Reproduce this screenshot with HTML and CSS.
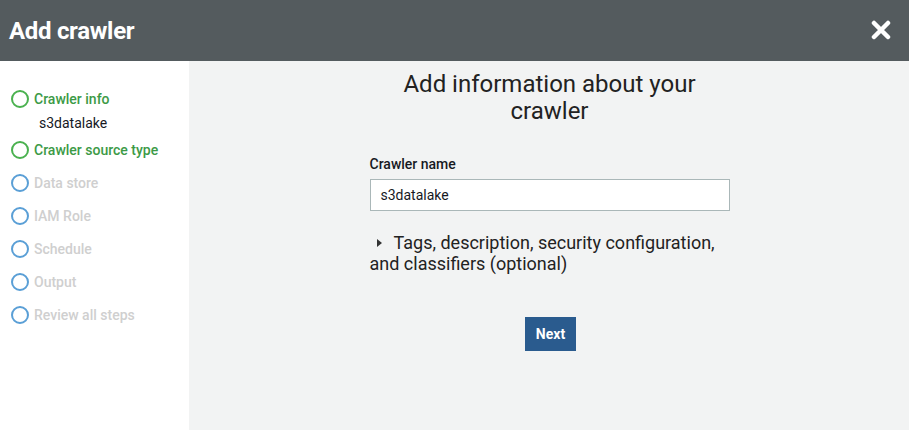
FILE: index.html
```html
<!DOCTYPE html>
<html>
<head>
<meta charset="utf-8">
<link rel="stylesheet" href="styles.css">
</head>
<body>
<div class="app">
  <header class="topbar">
    <h1 class="title">Add crawler</h1>
    <svg class="close" viewBox="0 0 20 20" width="20" height="20"><path d="M3 3 L17 17 M17 3 L3 17" stroke="#fff" stroke-width="4.5" stroke-linecap="round"/></svg>
  </header>
  <div class="body">
    <nav class="steps">
      <div class="step done"><span class="dot"></span><span class="label">Crawler info</span></div>
      <div class="sub">s3datalake</div>
      <div class="step done"><span class="dot"></span><span class="label">Crawler source type</span></div>
      <div class="step"><span class="dot"></span><span class="label">Data store</span></div>
      <div class="step"><span class="dot"></span><span class="label">IAM Role</span></div>
      <div class="step"><span class="dot"></span><span class="label">Schedule</span></div>
      <div class="step"><span class="dot"></span><span class="label">Output</span></div>
      <div class="step"><span class="dot"></span><span class="label">Review all steps</span></div>
    </nav>
    <main class="main">
      <div class="form">
        <h2 class="heading">Add information about your<br>crawler</h2>
        <label class="field-label">Crawler name</label>
        <div class="input">s3datalake</div>
        <div class="expander"><span class="caret"></span>Tags, description, security configuration, and classifiers (optional)</div>
        <div class="actions"><button class="btn">Next</button></div>
      </div>
    </main>
  </div>
</div>
</body>
</html>
```
FILE: styles.css
```css
* { box-sizing: border-box; }
html, body { margin: 0; padding: 0; }
body { font-family: Roboto, "Liberation Sans", sans-serif; color: #16191f; }
.app { width: 909px; height: 430px; display: flex; flex-direction: column; background: #f2f3f3; overflow: hidden; }
.topbar { height: 61px; background: #545b5e; display: flex; align-items: center; justify-content: space-between; padding: 0 18px 0 9px; flex: none; }
.title { margin: 0; color: #fff; font-size: 24px; font-weight: 700; letter-spacing: -0.3px; }
.close { display: block; margin-top: -2px; }
.body { flex: 1; display: flex; }
.steps { width: 189px; background: #fff; padding-top: 30px; flex: none; }
.step { display: flex; align-items: center; height: 33px; padding-left: 11px; margin-top: -9px; margin-bottom: 9px; }
.step .dot { width: 18px; height: 18px; border: 2px solid #5a9fd6; border-radius: 50%; flex: none; }
.step .label { margin-left: 5px; font-size: 14px; font-weight: 500; color: #cfcfcf; }
.step.done .dot { border-color: #4ab14f; }
.step.done .label { color: #3c9a46; }
.sub { font-size: 14px; color: #16191f; padding-left: 39px; margin-top: -9px; margin-bottom: 10px; height: 17px; }
.main { flex: 1; display: flex; justify-content: center; }
.form { width: 360px; margin-left: 1px; display: flex; flex-direction: column; }
.heading { margin: 10px 0 0; font-size: 24px; font-weight: 400; text-align: center; line-height: 27px; color: #222; }
.field-label { margin-top: 31px; font-size: 14px; font-weight: 500; color: #16191f; }
.input { margin-top: 7px; height: 32px; border: 1px solid #aab7b8; background: #fff; font-size: 14px; padding: 0 10px; display: flex; align-items: center; }
.expander { margin-top: 21px; font-size: 18px; line-height: 21px; color: #222; }
.caret { display: inline-block; width: 0; height: 0; border-left: 5px solid #333; border-top: 4px solid transparent; border-bottom: 4px solid transparent; margin: 0 12px 2px 7px; vertical-align: middle; }
.actions { display: flex; justify-content: center; margin-top: 43px; padding-left: 2px; }
.btn { width: 51px; height: 34px; background: #2a5b8e; color: #fff; border: none; font-family: Roboto, "Liberation Sans", sans-serif; font-weight: 700; font-size: 14px; padding: 0; }
```
